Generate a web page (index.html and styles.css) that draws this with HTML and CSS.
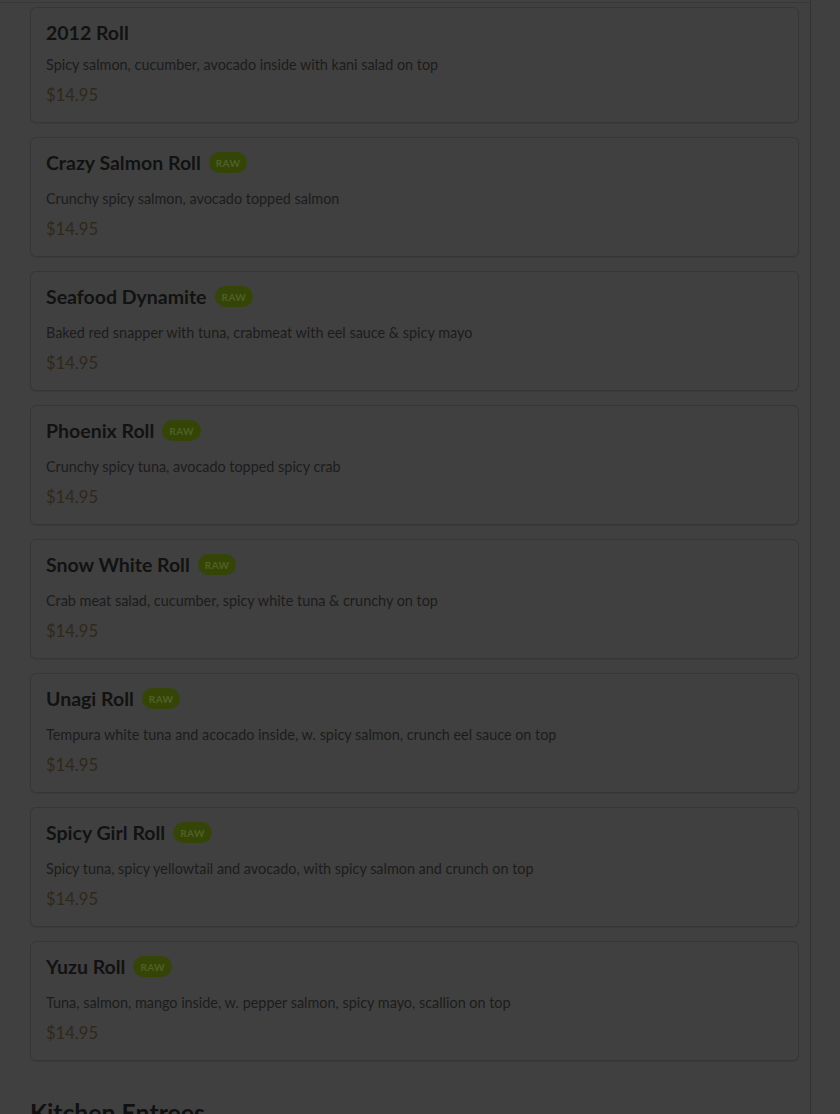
FILE: index.html
```html
<!DOCTYPE html>
<html>
<head>
<meta charset="utf-8">
<link rel="stylesheet" href="styles.css">
</head>
<body>
<div class="page">
  <main class="menu">
    <div class="topline"></div>
    <div class="list">
      <div class="card">
        <div class="title-row"><h3 class="name">2012 Roll</h3></div>
        <p class="desc">Spicy salmon, cucumber, avocado inside with kani salad on top</p>
        <div class="price">$14.95</div>
      </div>
      <div class="card">
        <div class="title-row badged"><h3 class="name">Crazy Salmon Roll</h3><span class="badge">RAW</span></div>
        <p class="desc">Crunchy spicy salmon, avocado topped salmon</p>
        <div class="price">$14.95</div>
      </div>
      <div class="card">
        <div class="title-row badged"><h3 class="name">Seafood Dynamite</h3><span class="badge">RAW</span></div>
        <p class="desc">Baked red snapper with tuna, crabmeat with eel sauce &amp; spicy mayo</p>
        <div class="price">$14.95</div>
      </div>
      <div class="card">
        <div class="title-row badged"><h3 class="name">Phoenix Roll</h3><span class="badge">RAW</span></div>
        <p class="desc">Crunchy spicy tuna, avocado topped spicy crab</p>
        <div class="price">$14.95</div>
      </div>
      <div class="card">
        <div class="title-row badged"><h3 class="name">Snow White Roll</h3><span class="badge">RAW</span></div>
        <p class="desc">Crab meat salad, cucumber, spicy white tuna &amp; crunchy on top</p>
        <div class="price">$14.95</div>
      </div>
      <div class="card">
        <div class="title-row badged"><h3 class="name">Unagi Roll</h3><span class="badge">RAW</span></div>
        <p class="desc">Tempura white tuna and acocado inside, w. spicy salmon, crunch eel sauce on top</p>
        <div class="price">$14.95</div>
      </div>
      <div class="card">
        <div class="title-row badged"><h3 class="name">Spicy Girl Roll</h3><span class="badge">RAW</span></div>
        <p class="desc">Spicy tuna, spicy yellowtail and avocado, with spicy salmon and crunch on top</p>
        <div class="price">$14.95</div>
      </div>
      <div class="card">
        <div class="title-row badged"><h3 class="name">Yuzu Roll</h3><span class="badge">RAW</span></div>
        <p class="desc">Tuna, salmon, mango inside, w. pepper salmon, spicy mayo, scallion on top</p>
        <div class="price">$14.95</div>
      </div>
    </div>
    <h2 class="section">Kitchen Entrees</h2>
  </main>
</div>
</body>
</html>
```
FILE: styles.css
```css
html, body {
  margin: 0;
  padding: 0;
  background: #404040;
  height: 100%;
  overflow: hidden;
}
body {
  font-family: "Lato", "Open Sans", sans-serif;
  color: #111;
}
.page {
  display: flex;
  height: 1114px;
}
.menu {
  width: 811px;
  border-right: 1px solid #333333;
  box-sizing: border-box;
  padding: 0 11px 0 30px;
}
.topline {
  height: 2px;
  border-bottom: 1px solid #383838;
  margin: 0 -11px 0 -30px;
}
.list {
  display: flex;
  flex-direction: column;
  gap: 14px;
  margin-top: 4px;
}
.card {
  border: 1px solid #363636;
  border-radius: 6px;
  box-shadow: 0 1px 1px rgba(0,0,0,0.08);
  padding: 13px 15px 17px;
  background: #404040;
}
.title-row {
  display: flex;
  align-items: flex-start;
  gap: 8px;
}
.name {
  margin: 0;
  font-size: 19.5px;
  line-height: 24px;
  font-weight: 700;
  color: #121212;
}
.badge {
  display: inline-flex;
  align-items: center;
  height: 21px;
  margin: 1px 0 6px;
  padding: 0 7px;
  border-radius: 11px;
  background: #354508;
  color: #4f6126;
  font-size: 10px;
  font-weight: 700;
  letter-spacing: 0.4px;
}
.desc {
  margin: 10px 0 0;
  font-size: 14.4px;
  line-height: 20px;
  color: #1c1c1c;
}
.price {
  margin-top: 10px;
  font-size: 16.6px;
  line-height: 20px;
  color: #2f281b;
}
.section {
  margin: 36px 0 0;
  font-size: 24.8px;
  line-height: 32px;
  font-weight: 700;
  color: #111;
}
```
